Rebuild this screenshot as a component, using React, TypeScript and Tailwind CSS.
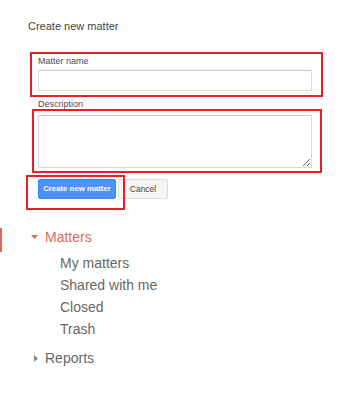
import React from "react";

export default function App() {
  const sub = ["My matters", "Shared with me", "Closed", "Trash"];
  return (
    <div
      className="relative w-[343px] h-[394px] bg-white overflow-hidden"
      style={{ fontFamily: '"Liberation Sans", Arial, sans-serif' }}
    >
      <div className="flex flex-col pt-[20px]">
        <div className="pl-[28px] text-[11px] leading-[13px] text-[#444]">Create new matter</div>

        <div className="flex flex-col pl-[38px] mt-[23px]">
          <label className="text-[9px] leading-[11px] text-[#4a4a4a]">Matter name</label>
          <input
            className="mt-[3px] w-[274px] h-[21px] border border-[#d9d9d9] border-t-[#c8c8c8] bg-white outline-none"
            type="text"
          />
          <label className="mt-[8px] text-[9px] leading-[11px] text-[#4a4a4a]">Description</label>
          <textarea className="mt-[5px] w-[274px] h-[53px] border border-[#d9d9d9] border-t-[#c8c8c8] bg-white outline-none" />
          <div className="mt-[11px] flex gap-[2px]">
            <button className="w-[78px] h-[20px] rounded-[2px] bg-[#4d90fe] border border-[#3b83f7] text-white text-[7.8px] font-bold leading-none">
              Create new matter
            </button>
            <button className="w-[50px] h-[20px] rounded-[2px] bg-[#f5f5f5] border border-[#dcdcdc] text-[#444] text-[8.5px] leading-none">
              Cancel
            </button>
          </div>
        </div>

        <div className="mt-[28px] flex flex-col">
          <div className="relative flex items-center h-[20px] pl-[31px]">
            <span className="absolute left-0 top-[1px] w-[2px] h-[24px] bg-[#e0685a]" />
            <svg width="7" height="4" viewBox="0 0 7 4" className="mr-[7px]">
              <path d="M0 0 L7 0 L3.5 4 Z" fill="#e0685a" />
            </svg>
            <span className="text-[14px] leading-[20px] text-[#e0685a]">Matters</span>
          </div>
          <div className="mt-[5px] flex flex-col pl-[60px]">
            {sub.map((s) => (
              <div key={s} className="h-[22px] text-[14px] leading-[22px] text-[#666]">
                {s}
              </div>
            ))}
          </div>
          <div className="mt-[8px] flex items-center h-[20px] pl-[34px]">
            <svg width="4" height="7" viewBox="0 0 4 7" className="mr-[7px]">
              <path d="M0 0 L4 3.5 L0 7 Z" fill="#888" />
            </svg>
            <span className="text-[14px] leading-[20px] text-[#666]">Reports</span>
          </div>
        </div>
      </div>

      <div className="absolute left-[30px] top-[52px] w-[293px] h-[45px] border-2 border-[#ea1c24] pointer-events-none" />
      <div className="absolute left-[32px] top-[109px] w-[290px] h-[64px] border-2 border-[#ea1c24] pointer-events-none" />
      <div className="absolute left-[26px] top-[175px] w-[99px] h-[35px] border-2 border-[#ea1c24] pointer-events-none" />
    </div>
  );
}
